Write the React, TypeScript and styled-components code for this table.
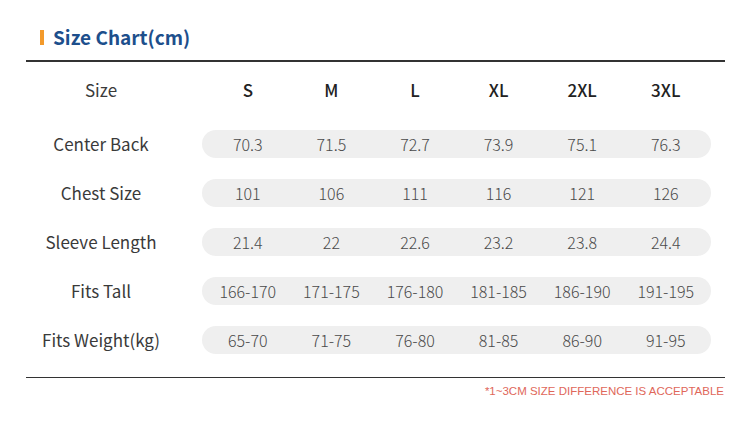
import React from "react";
import styled, { createGlobalStyle } from "styled-components";

const GlobalStyle = createGlobalStyle`
  body {
    margin: 0;
    background: #ffffff;
    font-family: "Noto Sans CJK SC", "Noto Sans", sans-serif;
  }
`;

const Page = styled.div`
  width: 750px;
  height: 426px;
  padding: 25px 25px 0 26px;
  box-sizing: border-box;
`;

const TitleRow = styled.div`
  display: flex;
  align-items: center;
  height: 24px;
  padding-left: 14px;
  gap: 9px;
`;

const Marker = styled.span`
  width: 4px;
  height: 15px;
  background: #f39a2b;
`;

const Title = styled.h1`
  margin: 0;
  font-size: 19px;
  font-weight: 700;
  color: #1d4f8c;
  line-height: 24px;
`;

const Rule = styled.div<{ $top: number }>`
  height: 1.5px;
  background: #333333;
  margin-top: ${(p) => p.$top}px;
`;

const Table = styled.div`
  display: flex;
  flex-direction: column;
  gap: 21px;
  padding: 14px 0 23px;
`;

const Row = styled.div<{ $header?: boolean }>`
  display: grid;
  grid-template-columns: 150px 509px;
  column-gap: 26px;
  align-items: center;
  height: 28px;
  margin-bottom: ${(p) => (p.$header ? "5px" : "0")};
`;

const Label = styled.div`
  text-align: center;
  font-size: 17px;
  color: #3a3a3a;
  white-space: nowrap;
`;

const Cells = styled.div<{ $pill?: boolean }>`
  display: grid;
  grid-template-columns: repeat(6, 83.6px);
  padding: 0 4px;
  height: 28px;
  align-items: center;
  border-radius: 14px;
  background: ${(p) => (p.$pill ? "#efefef" : "transparent")};
`;

const Cell = styled.div<{ $header?: boolean }>`
  text-align: center;
  font-size: ${(p) => (p.$header ? "17px" : "16px")};
  font-weight: ${(p) => (p.$header ? 500 : 300)};
  color: ${(p) => (p.$header ? "#222222" : "#4a4a4a")};
  white-space: nowrap;
`;

const Note = styled.div`
  text-align: right;
  margin-top: 7px;
  padding-right: 1px;
  font-family: "Liberation Sans", Arial, sans-serif;
  font-size: 11.5px;
  color: #e0675a;
`;

const sizes = ["S", "M", "L", "XL", "2XL", "3XL"];

const rows: { label: string; values: string[] }[] = [
  { label: "Center Back", values: ["70.3", "71.5", "72.7", "73.9", "75.1", "76.3"] },
  { label: "Chest Size", values: ["101", "106", "111", "116", "121", "126"] },
  { label: "Sleeve Length", values: ["21.4", "22", "22.6", "23.2", "23.8", "24.4"] },
  { label: "Fits Tall", values: ["166-170", "171-175", "176-180", "181-185", "186-190", "191-195"] },
  { label: "Fits Weight(kg)", values: ["65-70", "71-75", "76-80", "81-85", "86-90", "91-95"] },
];

export default function App() {
  return (
    <Page>
      <GlobalStyle />
      <TitleRow>
        <Marker />
        <Title>Size Chart(cm)</Title>
      </TitleRow>
      <Rule $top={11} />
      <Table>
        <Row $header>
          <Label>Size</Label>
          <Cells>
            {sizes.map((s) => (
              <Cell key={s} $header>
                {s}
              </Cell>
            ))}
          </Cells>
        </Row>
        {rows.map((r) => (
          <Row key={r.label}>
            <Label>{r.label}</Label>
            <Cells $pill>
              {r.values.map((v, i) => (
                <Cell key={i}>{v}</Cell>
              ))}
            </Cells>
          </Row>
        ))}
      </Table>
      <Rule $top={0} />
      <Note>*1~3CM SIZE DIFFERENCE IS ACCEPTABLE</Note>
    </Page>
  );
}
